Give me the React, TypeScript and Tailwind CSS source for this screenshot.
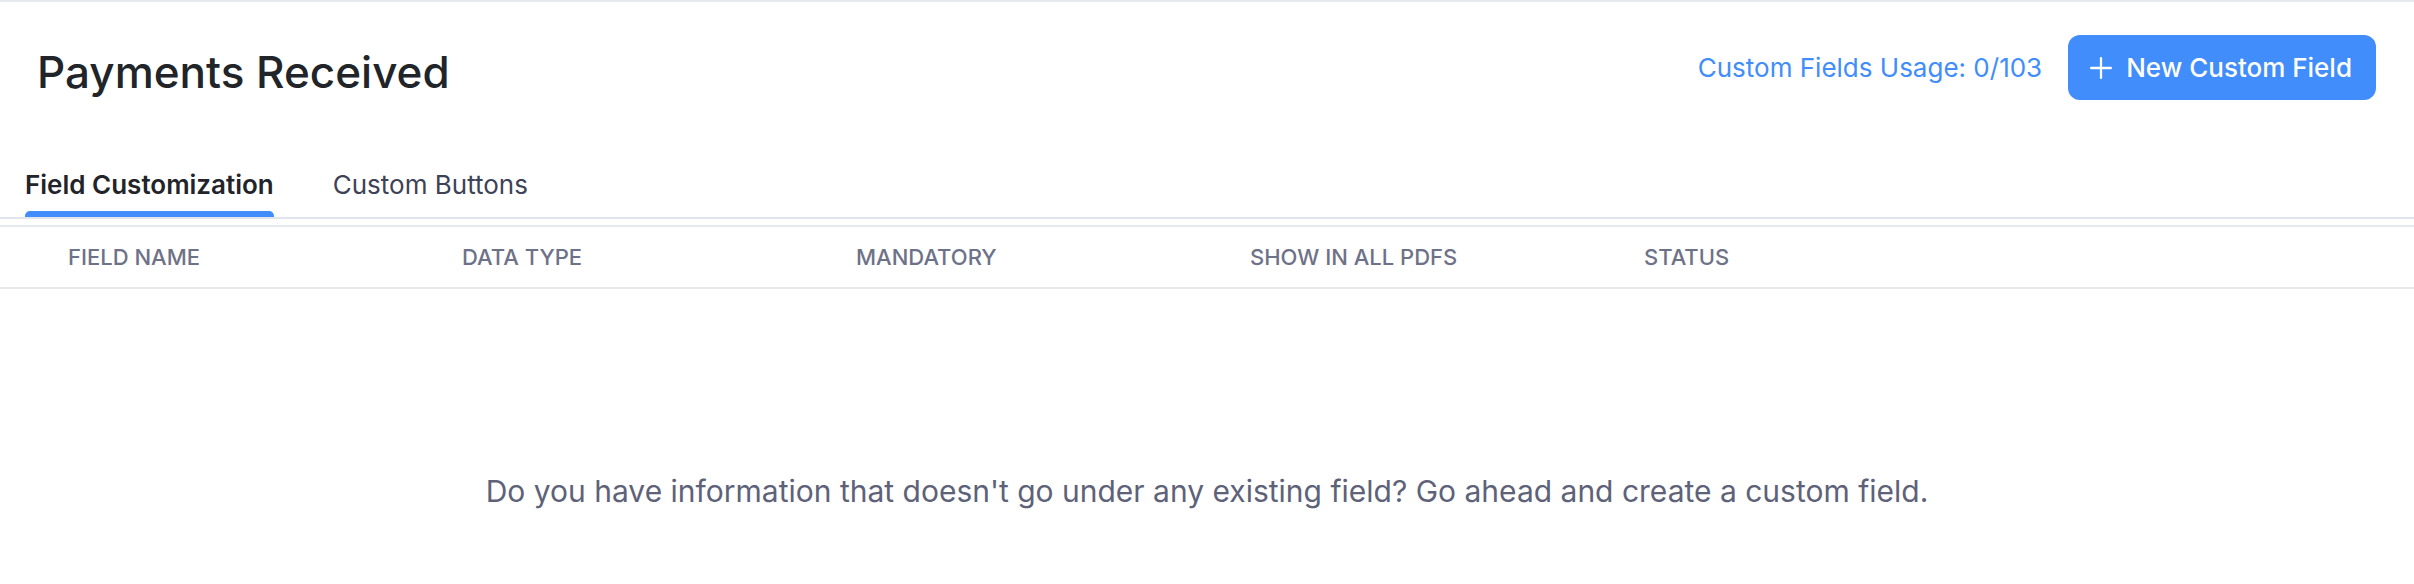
import React from 'react';
import { Plus } from 'lucide-react';

const columns = ['Field Name', 'Data Type', 'Mandatory', 'Show in All PDFs', 'Status'];

export default function App() {
  return (
    <div className="min-h-screen w-full bg-white border-t-2 border-[#e8e9ee] font-['Inter',sans-serif] text-[#212529]">
      {/* Header */}
      <div className="flex items-center justify-between pl-[37px] pr-[38px] pt-[33px]">
        <h1 className="text-[44px] leading-[50px] font-medium mt-[8px]">Payments Received</h1>
        <div className="flex items-center gap-[26px]">
          <span className="text-[26px] text-[#408dfb]">Custom Fields Usage: 0/103</span>
          <button className="flex items-center gap-[8px] h-[65px] pl-[16px] pr-[24px] rounded-[12px] bg-[#408dfb] text-white text-[26px] font-medium">
            <Plus size={34} strokeWidth={1.6} />
            New Custom Field
          </button>
        </div>
      </div>

      {/* Tabs */}
      <div className="flex gap-[59px] pl-[25px] mt-[67px] border-b-2 border-[#e3e5ec]">
        <div className="flex flex-col">
          <span className="text-[26px] leading-[36px] font-semibold text-[#222429] pb-[8px]">Field Customization</span>
          <div className="h-[6px] rounded-t-[5px] bg-[#408dfb]" />
        </div>
        <div className="flex flex-col">
          <span className="text-[26px] leading-[36px] text-[#3e4257] pb-[8px]">Custom Buttons</span>
        </div>
      </div>

      {/* Table header */}
      <div className="mt-[6px] flex items-center h-[64px] pl-[68px] border-y-2 border-[#e8e9ee]">
        {columns.map((c) => (
          <div key={c} className="w-[394px] text-[22px] font-medium uppercase text-[#6e7288]">
            {c}
          </div>
        ))}
      </div>

      {/* Empty state */}
      <div className="flex justify-center pt-[180px]">
        <p className="text-[30px] text-[#5e6278]">
          Do you have information that doesn't go under any existing field? Go ahead and create a custom field.
        </p>
      </div>
    </div>
  );
}
